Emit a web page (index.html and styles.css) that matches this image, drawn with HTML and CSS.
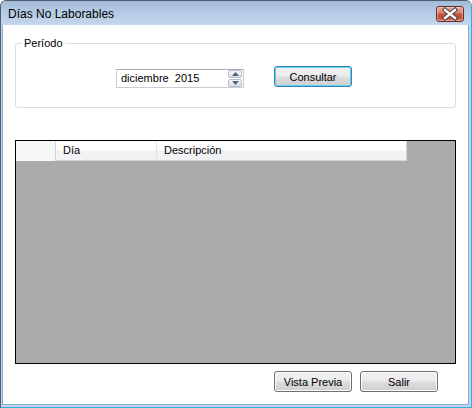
FILE: index.html
```html
<!DOCTYPE html>
<html lang="es">
<head>
<meta charset="utf-8">
<title>Días No Laborables</title>
<link rel="stylesheet" href="styles.css">
</head>
<body>
<div class="window">
  <div class="titlebar">
    <span class="title">Días No Laborables</span>
    <div class="close">
      <svg width="26" height="14" viewBox="0 0 26 14">
        <path d="M8 3 L18 11 M18 3 L8 11" stroke="#4a3a38" stroke-width="4.4" stroke-linecap="square" fill="none"/>
        <path d="M8 3 L18 11 M18 3 L8 11" stroke="#ffffff" stroke-width="2.4" stroke-linecap="square" fill="none"/>
      </svg>
    </div>
  </div>
  <div class="client">
    <div class="group">
      <span class="legend">Período</span>
      <div class="date">
        <span class="date-text">diciembre&nbsp; 2015</span>
        <div class="spin">
          <div class="spin-btn">
            <svg width="7" height="4" viewBox="0 0 7 4"><path d="M0 4 L3.5 0 L7 4 Z" fill="#4d6185"/></svg>
          </div>
          <div class="spin-btn">
            <svg width="7" height="4" viewBox="0 0 7 4"><path d="M0 0 L3.5 4 L7 0 Z" fill="#4d6185"/></svg>
          </div>
        </div>
      </div>
      <button class="btn btn-default">Consultar</button>
    </div>
    <div class="grid">
      <div class="header">
        <div class="hcell rowhead"></div>
        <div class="hcell col-dia">Día</div>
        <div class="hcell col-desc">Descripción</div>
      </div>
    </div>
    <div class="actions">
      <button class="btn">Vista Previa</button>
      <button class="btn">Salir</button>
    </div>
  </div>
</div>
</body>
</html>
```

FILE: styles.css
```css
* { box-sizing: border-box; }

html, body {
  margin: 0;
  padding: 0;
  background: #ffffff;
}

body {
  font-family: "Liberation Sans", Arial, sans-serif;
  font-size: 11px;
  color: #000000;
}

.window {
  width: 472px;
  height: 408px;
  border: 1px solid #4d5d72;
  border-right-color: #2fb0dc;
  border-bottom-color: #2fb0dc;
  border-radius: 6px 6px 0 0;
  background: #c3d6ec;
  display: flex;
  flex-direction: column;
  overflow: hidden;
}

.titlebar {
  height: 24px;
  flex: none;
  display: flex;
  align-items: center;
  justify-content: space-between;
  padding: 0 7px 0 7px;
  background: linear-gradient(to bottom, #a3bbd8 0%, #b4cae4 45%, #c3d6ec 100%);
}

.title {
  font-size: 12px;
  padding-top: 2px;
  color: #000;
}

.close {
  width: 28px;
  height: 16px;
  margin-top: 1px;
  border: 1px solid #6b2c24;
  border-radius: 3px;
  background: linear-gradient(to bottom, #e8aa9c 0%, #d98472 40%, #c5533b 52%, #c24d35 75%, #d67a5f 100%);
  box-shadow: inset 0 0 0 1px rgba(255, 255, 255, 0.35);
  display: flex;
  align-items: center;
  justify-content: center;
}

.close svg { display: block; }

.client {
  flex: 1;
  margin: 0 2px 2px 1px;
  border: 1px solid #8aaad0;
  border-top: none;
  background: #ffffff;
  display: flex;
  flex-direction: column;
  padding: 0 12px;
}

.group {
  position: relative;
  margin-top: 18px;
  height: 65px;
  flex: none;
  border: 1px solid #d5dfe5;
  border-radius: 3px;
  display: flex;
  align-items: flex-start;
  padding: 22px 0 0 100px;
}

.legend {
  position: absolute;
  top: -7px;
  left: 6px;
  padding: 0 2px;
  background: #ffffff;
  line-height: 13px;
}

.date {
  margin-top: 3px;
  width: 128px;
  height: 19px;
  border: 1px solid #c8cbd0;
  border-top-color: #abadb3;
  display: flex;
  align-items: center;
}

.date-text {
  flex: 1;
  padding-left: 4px;
  line-height: 15px;
}

.spin {
  width: 14px;
  height: 17px;
  margin-right: 1px;
  display: flex;
  flex-direction: column;
  gap: 1px;
}

.spin-btn {
  flex: 1;
  border: 1px solid #b7c0cc;
  border-radius: 2px;
  background: linear-gradient(to bottom, #f4f6f9 0%, #e6ebf1 50%, #d6dde6 100%);
  display: flex;
  align-items: center;
  justify-content: center;
}

.spin-btn svg { display: block; }

.btn {
  width: 78px;
  height: 21px;
  margin-left: 30px;
  padding: 0;
  font-family: "Liberation Sans", Arial, sans-serif;
  font-size: 11px;
  color: #000000;
  border: 1px solid #707070;
  border-radius: 3px;
  background: linear-gradient(to bottom, #f2f2f2 0%, #ebebeb 48%, #dddddd 52%, #cfcfcf 100%);
  box-shadow: inset 0 0 0 1px #fbfbfb;
}

.btn-default {
  border-color: #3c7fb1;
  box-shadow: inset 0 0 0 1px #5cd4f5;
}

.grid {
  margin-top: 32px;
  height: 224px;
  flex: none;
  border: 1px solid #000000;
  background: #ababab;
}

.header {
  width: 391px;
  height: 20px;
  display: flex;
  background: #ffffff;
}

.hcell {
  height: 20px;
  line-height: 20px;
  padding-left: 7px;
  padding-top: 1px;
}

.rowhead {
  width: 40px;
  border-right: 1px solid #d5d5d5;
  background: #f7f7f7;
}

.col-dia,
.col-desc {
  background: linear-gradient(to bottom, #ffffff 0%, #ffffff 45%, #f1f2f4 55%, #f1f2f4 100%);
  border-bottom: 1px solid #d5d5d5;
  line-height: 17px;
}

.col-dia {
  width: 101px;
  border-right: 1px solid #e3e4e6;
}

.col-desc {
  flex: 1;
  border-right: 1px solid #d5d5d5;
}

.actions {
  margin-top: 7px;
  display: flex;
  justify-content: flex-end;
  gap: 8px;
  padding-right: 18px;
}

.actions .btn {
  margin-left: 0;
}
```
